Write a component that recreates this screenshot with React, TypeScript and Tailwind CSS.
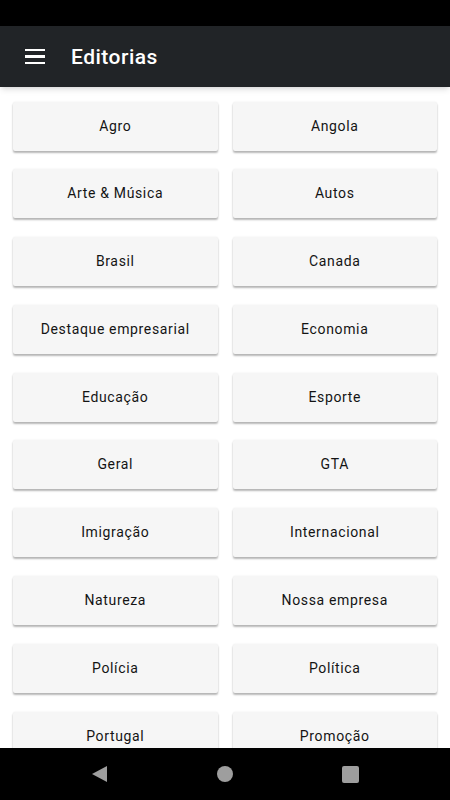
import React from 'react';

const categories = [
  'Agro', 'Angola',
  'Arte & Música', 'Autos',
  'Brasil', 'Canada',
  'Destaque empresarial', 'Economia',
  'Educação', 'Esporte',
  'Geral', 'GTA',
  'Imigração', 'Internacional',
  'Natureza', 'Nossa empresa',
  'Polícia', 'Política',
  'Portugal', 'Promoção',
];

export default function App() {
  return (
    <div className="flex flex-col h-[800px] w-[450px] bg-white overflow-hidden" style={{ fontFamily: 'Roboto, "Noto Sans", sans-serif' }}>
      {/* status bar */}
      <div className="h-[26px] bg-black shrink-0" />

      {/* toolbar */}
      <header className="h-[61px] bg-[#212427] shrink-0 flex items-center shadow-md z-10">
        <button className="ml-[25px] w-[20px] flex flex-col gap-[4px]">
          <span className="block h-[2.5px] bg-white" />
          <span className="block h-[2.5px] bg-white" />
          <span className="block h-[2.5px] bg-white" />
        </button>
        <h1 className="ml-[26px] mt-[2px] text-white text-[21px] font-medium tracking-[0.5px]">Editorias</h1>
      </header>

      {/* list */}
      <main className="flex-1 overflow-hidden">
        <div className="grid grid-cols-2 gap-x-[15px] gap-y-[18.8px] px-[13px] pt-[14.5px]">
          {categories.map((c) => (
            <button
              key={c}
              className="h-[49px] bg-[#f6f6f6] rounded-[2px] shadow-[0_2px_2px_rgba(0,0,0,0.28),0_0_2px_rgba(0,0,0,0.08)] text-[14px] font-normal text-[#141414] tracking-[0.65px]"
            >
              {c}
            </button>
          ))}
        </div>
      </main>

      {/* nav bar */}
      <nav className="h-[52px] bg-black shrink-0 flex items-center justify-center">
        <div className="flex items-center gap-[109px]">
          <svg width="17" height="18" viewBox="0 0 17 18">
            <path d="M16 1 L1 9 L16 17 Z" fill="#9e9e9e" />
          </svg>
          <span className="block w-[16px] h-[16px] rounded-full bg-[#9e9e9e]" />
          <span className="block w-[17px] h-[17px] rounded-[2px] bg-[#9e9e9e]" />
        </div>
      </nav>
    </div>
  );
}
